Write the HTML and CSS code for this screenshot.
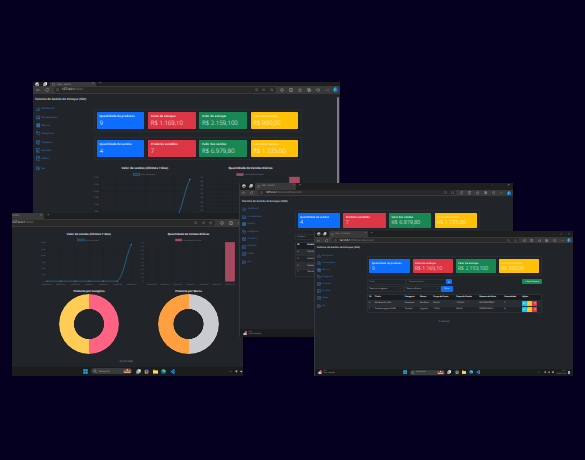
FILE: index.html
```
<!DOCTYPE html>
<html lang="pt-BR">
<head>
<meta charset="utf-8">
<title>Sistema de Gestão de Estoque</title>
<link rel="stylesheet" href="styles.css">
</head>
<body>
<svg class="defs" aria-hidden="true">
  <defs>
    <symbol id="i-dash" viewBox="0 0 16 16"><path d="M2 12.5a6.5 6.5 0 1 1 12 0zM8 11l3-4M4 9h1M8 4v2" fill="none" stroke="currentColor" stroke-width="1.6"/></symbol>
    <symbol id="i-truck" viewBox="0 0 16 16"><path d="M1 3h9v9H1zM10 6h3l2 3v3h-5" fill="none" stroke="currentColor" stroke-width="1.6"/><circle cx="4" cy="12.5" r="1.8" fill="currentColor"/><circle cx="12" cy="12.5" r="1.8" fill="currentColor"/></symbol>
    <symbol id="i-shop" viewBox="0 0 16 16"><path d="M1 6l2-4h10l2 4v2H1zM2 9h12v5H2z" fill="currentColor" fill-opacity=".65" stroke="currentColor" stroke-width="1"/></symbol>
    <symbol id="i-tag" viewBox="0 0 16 16"><path d="M1 2h6l7 7-5 5-7-7zM9 2l6 6" fill="none" stroke="currentColor" stroke-width="1.8"/><circle cx="5" cy="5" r="1.2" fill="currentColor"/></symbol>
    <symbol id="i-box" viewBox="0 0 16 16"><path d="M8 1l6.500 3v8L8 15l-6.500-3V4zM1.500 4L8 7l6.500-3M8 7v8" fill="none" stroke="currentColor" stroke-width="1.8"/></symbol>
    <symbol id="i-in" viewBox="0 0 16 16"><path d="M1.500 1.500h13v13h-13zM11 5l-6 6M5 6.500V11h4.500" fill="none" stroke="currentColor" stroke-width="1.700"/></symbol>
    <symbol id="i-out" viewBox="0 0 16 16"><path d="M1.500 1.500h13v13h-13zM5 11l6-6M6.500 5H11v4.500" fill="none" stroke="currentColor" stroke-width="1.700"/></symbol>
    <symbol id="i-exit" viewBox="0 0 16 16"><path d="M10 5V3H1.500v10H10v-2M5 8h10M12 5l3 3-3 3" fill="none" stroke="currentColor" stroke-width="1.800"/></symbol>
    <symbol id="i-back" viewBox="0 0 16 16"><path d="M15 8H2M7 3L2 8l5 5" fill="none" stroke="currentColor" stroke-width="1.600"/></symbol>
    <symbol id="i-reload" viewBox="0 0 16 16"><path d="M14 8a6 6 0 1 1-2-4.500M14 1v4h-4" fill="none" stroke="currentColor" stroke-width="1.600"/></symbol>
    <symbol id="i-info" viewBox="0 0 16 16"><circle cx="8" cy="8" r="6" fill="none" stroke="currentColor" stroke-width="1.600"/><path d="M8 7v4M8 4v1.500" stroke="currentColor" stroke-width="1.600"/></symbol>
    <symbol id="i-search" viewBox="0 0 16 16"><circle cx="7" cy="7" r="4.500" fill="none" stroke="currentColor" stroke-width="1.800"/><path d="M10.500 10.500L15 15" stroke="currentColor" stroke-width="1.800"/></symbol>
    <symbol id="i-star" viewBox="0 0 16 16"><path d="M8 1.500l2 4.500 5 .5-3.700 3.300L12.400 15 8 12.300 3.600 15l1.100-5.200L1 6.500 6 6z" fill="none" stroke="currentColor" stroke-width="1.500"/></symbol>
    <symbol id="i-read" viewBox="0 0 16 16"><path d="M2 13L7 3l4 10M4 9h5M11 3q3 2 0 5" fill="none" stroke="currentColor" stroke-width="1.500"/></symbol>
    <symbol id="i-split" viewBox="0 0 16 16"><rect x="1.500" y="2" width="13" height="12" rx="2" fill="none" stroke="currentColor" stroke-width="1.800"/><path d="M8 2v12" stroke="currentColor" stroke-width="1.800"/></symbol>
    <symbol id="i-copy" viewBox="0 0 16 16"><path d="M2 2h9v9H2zM6 6h8v8H6z" fill="none" stroke="currentColor" stroke-width="1.800"/></symbol>
    <symbol id="i-heart" viewBox="0 0 16 16"><path d="M8 14L2 8q-1-5 3-5 2 0 3 2 1-2 3-2 4 0 3 5z" fill="none" stroke="currentColor" stroke-width="1.800"/><circle cx="12" cy="11" r="3" fill="#2f8f4e"/></symbol>
    <symbol id="i-dots" viewBox="0 0 16 16"><path d="M2 8h3M7 8h3M12 8h3" stroke="currentColor" stroke-width="2"/></symbol>
    <symbol id="i-copilot" viewBox="0 0 16 16"><path d="M5 1h6l2 8-5 6H3L1 8z" fill="#1698d5"/><path d="M10 4h4l1 6-3 5H7z" fill="#2467d8"/><path d="M2 8l4-6 2 6-3 5z" fill="#31c5cf"/></symbol>
    <symbol id="i-doc" viewBox="0 0 16 16"><path d="M3 1h6l4 4v10H3zM9 1v4h4" fill="none" stroke="currentColor" stroke-width="1.500"/></symbol>
    <symbol id="i-avatar" viewBox="0 0 16 16"><circle cx="8" cy="8" r="7" fill="#d8d8d8"/><path d="M3 12q1-5 5-4t5-3v6l-4 3z" fill="#605c5c"/><circle cx="13" cy="5" r="2.500" fill="#c45"/></symbol>
    <symbol id="i-win" viewBox="0 0 16 16"><path d="M1 1h6.500v6.500H1zM8.500 1H15v6.500H8.500zM1 8.500h6.500V15H1zM8.500 8.500H15V15H8.500z" fill="#23aee5"/></symbol>
    <symbol id="i-task" viewBox="0 0 16 16"><path d="M5 1h10v10H5z" fill="#eee"/><path d="M1 5h10v10H1z" fill="#aaa"/></symbol>
    <symbol id="i-pilot" viewBox="0 0 16 16"><path d="M3 2h5l1 6-5 3-3-4z" fill="#268be0"/><path d="M8 1l5 2 2 5-5 1z" fill="#a761d6"/><path d="M15 8l-2 6-6 1 2-6z" fill="#ef754d"/><path d="M2 9l5 1v5l-4-1z" fill="#d8c049"/></symbol>
    <symbol id="i-folder" viewBox="0 0 16 16"><path d="M0 2h6l2 2h8v11H0z" fill="#e7ae2b"/><path d="M0 6h16v7H0z" fill="#ffda67"/></symbol>
    <symbol id="i-edge" viewBox="0 0 16 16"><circle cx="8" cy="8" r="7.500" fill="#1687d2"/><path d="M2 6q3-6 9-4 5 3 4 7-4 3-6 0 0-4-7-3z" fill="#49cb91"/><path d="M6 8q0 5 7 5-5 4-9 0-2-4 2-5z" fill="#12539f"/></symbol>
    <symbol id="i-code" viewBox="0 0 16 16"><path d="M11 0l4 2v12l-4 2-6-6-3 2-1-1 3-3-3-3 1-1 3 2zm0 5L8 8l3 3z" fill="#2189d8"/></symbol>
    <symbol id="i-town" viewBox="0 0 24 16"><path d="M1 14V7l4-3 3 4 3-6 4 5 3-5 5 5v7z" fill="#a45d50"/><path d="M3 11h18v3H3z" fill="#e5bf83"/><circle cx="12" cy="5" r="2" fill="#e9d7dc"/><circle cx="19" cy="6" r="2" fill="#db6d78"/></symbol>
    <symbol id="i-weather" viewBox="0 0 16 16"><path d="M1 15V9l6-3 7 4v5z" fill="#8fc3f1"/><circle cx="10.500" cy="4.500" r="4.500" fill="#e3434e"/><path d="M5 7h5v3H5z" fill="#eee"/></symbol>
    <symbol id="i-wifi" viewBox="0 0 16 16"><path d="M1 5q7-6 14 0L8 14z" fill="currentColor"/></symbol>
    <symbol id="i-sound" viewBox="0 0 16 16"><path d="M1 5h4l5-4v14l-5-4H1zM12 4q4 4 0 8" fill="currentColor"/></symbol>
    <symbol id="i-batt" viewBox="0 0 16 16"><path d="M0 4h14v8H0zM14 6h2v4h-2z" fill="currentColor"/></symbol>
    <symbol id="i-up" viewBox="0 0 16 16"><path d="M2 11l6-6 6 6" fill="none" stroke="currentColor" stroke-width="1.800"/></symbol>
    <symbol id="i-pen" viewBox="0 0 16 16"><path d="M2 14l1-4 8-8 3 3-8 8z" fill="none" stroke="currentColor" stroke-width="1.600"/></symbol>
    <symbol id="i-eye" viewBox="0 0 16 16"><path d="M1 8q7-9 14 0-7 9-14 0z" fill="none" stroke="currentColor" stroke-width="1.600"/><circle cx="8" cy="8" r="2" fill="currentColor"/></symbol>
    <symbol id="i-trash" viewBox="0 0 16 16"><path d="M2 4h12M4 4v10h8V4M6 2h4" fill="none" stroke="currentColor" stroke-width="1.600"/></symbol>

    <symbol id="chart-line" viewBox="39.25 230 99.5 58">
      <text class="c-title" x="67" y="234.700" textLength="44">Valor de vendas (Últimos 7 dias)</text>
      <rect x="78" y="239" width="6.500" height="2" fill="#1b3c56" stroke="#2e77aa" stroke-width=".4"/>
      <text class="c-label" x="85.500" y="240.800" textLength="13.500">Valor de vendas</text>
      <path class="c-grid" d="M47 242.400V282M61 242.400V282M75.500 242.400V282M89.500 242.400V282M103.500 242.400V282M117.500 242.400V282M131.500 242.400V282M45.500 242.400h86M45.500 248.900h86M45.500 255.300h86M45.500 261.800h86M45.500 268.200h86M45.500 274.700h86M45.500 281.200h86"/>
      <g class="c-label">
        <text x="41" y="243.100">3.000</text><text x="41" y="249.600">2.500</text><text x="41" y="256">2.000</text><text x="41" y="262.500">1.500</text><text x="41" y="268.900">1.000</text><text x="42" y="275.400">500</text><text x="44" y="281.900">0</text>
      </g>
      <path d="M47 281.200H117.500C124 276 125.500 258 131.500 244.500" fill="none" stroke="#2b78b2" stroke-width=".65"/>
      <g fill="#2d7dbb"><circle cx="47" cy="281.200" r=".75"/><circle cx="61" cy="281.200" r=".75"/><circle cx="75.500" cy="281.200" r=".75"/><circle cx="89.500" cy="281.200" r=".75"/><circle cx="103.500" cy="281.200" r=".75"/><circle cx="117.500" cy="281.200" r=".75"/><circle cx="131.500" cy="244.500" r=".75"/></g>
      <g class="c-label">
        <text x="42.500" y="284.700" textLength="9">2024-09-24</text><text x="56.500" y="284.700" textLength="9">2024-09-25</text><text x="71" y="284.700" textLength="9">2024-09-26</text><text x="85" y="284.700" textLength="9">2024-09-27</text><text x="99" y="284.700" textLength="9">2024-09-28</text><text x="113" y="284.700" textLength="9">2024-09-29</text><text x="127" y="284.700" textLength="9">2024-09-30</text>
      </g>
    </symbol>
    <symbol id="chart-bar" viewBox="138.75 230 99.5 58">
      <text class="c-title" x="167.500" y="234.700" textLength="41.500">Quantidade de Vendas Diárias</text>
      <rect x="175.300" y="239" width="6.300" height="2" fill="#a44860" stroke="#d9506f" stroke-width=".3"/>
      <text class="c-label" x="182.500" y="240.800" textLength="18.500">Quantidade de Vendas</text>
      <path class="c-grid" d="M145 242.400V282M158 242.400V282M171 242.400V282M184 242.400V282M197 242.400V282M210 242.400V282M223 242.400V282M236 242.400V282M144 242.400h92M144 246.300h92M144 250.200h92M144 254h92M144 257.900h92M144 261.800h92M144 265.700h92M144 269.600h92M144 273.400h92M144 277.300h92M144 281.200h92"/>
      <g class="c-label">
        <text x="141" y="243.100">1,0</text><text x="141" y="247">0,9</text><text x="141" y="250.900">0,8</text><text x="141" y="254.700">0,7</text><text x="141" y="258.600">0,6</text><text x="141" y="262.500">0,5</text><text x="141" y="266.400">0,4</text><text x="141" y="270.300">0,3</text><text x="141" y="274.100">0,2</text><text x="141" y="278">0,1</text><text x="142" y="281.900">0</text>
      </g>
      <rect x="225" y="242.300" width="9.500" height="38.900" fill="#a54a60" stroke="#d04c69" stroke-width=".35"/>
      <g class="c-label">
        <text x="147" y="284.700" textLength="9">2024-09-24</text><text x="160" y="284.700" textLength="9">2024-09-25</text><text x="173" y="284.700" textLength="9">2024-09-26</text><text x="186" y="284.700" textLength="9">2024-09-27</text><text x="199" y="284.700" textLength="9">2024-09-28</text><text x="212" y="284.700" textLength="9">2024-09-29</text><text x="225" y="284.700" textLength="9">2024-09-30</text>
      </g>
    </symbol>
  </defs>
</svg>

<main class="canvas">
  <section class="window win-a">
    <div class="tabs"><svg><use href="#i-avatar"/></svg><svg><use href="#i-task"/></svg><div class="tab"><svg><use href="#i-doc"/></svg><span>SGE - Home</span><b>×</b></div><i>+</i></div>
    <div class="toolbar">
      <svg><use href="#i-back"/></svg><svg><use href="#i-reload"/></svg>
      <div class="address"><svg><use href="#i-info"/></svg><span>127.0.0.1<em>:8000</em></span><svg class="push"><use href="#i-search"/></svg><svg><use href="#i-read"/></svg><svg><use href="#i-star"/></svg></div>
      <div class="tools"><svg><use href="#i-info"/></svg><svg><use href="#i-split"/></svg><svg><use href="#i-star"/></svg><svg><use href="#i-copy"/></svg><svg><use href="#i-heart"/></svg><svg><use href="#i-dots"/></svg><svg class="pilot"><use href="#i-copilot"/></svg></div>
    </div>
    <header>Sistema de Gestão de Estoque (SGE)</header>
    <div class="body">
      <nav><a><svg><use href="#i-dash"/></svg>Dashboard</a><a><svg><use href="#i-truck"/></svg>Fornecedores</a><a><svg><use href="#i-shop"/></svg>Marcas</a><a><svg><use href="#i-tag"/></svg>Categorias</a><a><svg><use href="#i-box"/></svg>Produtos</a><a><svg><use href="#i-in"/></svg>Entradas</a><a><svg><use href="#i-out"/></svg>Saídas</a><a class="exit"><svg><use href="#i-exit"/></svg>Sair</a></nav>
      <div class="main">
        <div class="cards">
          <div class="card blue"><h3>Quantidade de produtos</h3><p>9</p></div>
          <div class="card red"><h3>Custo de estoque</h3><p>R$ 1.169,10</p></div>
          <div class="card green"><h3>Valor de estoque</h3><p>R$ 2.159,100</p></div>
          <div class="card yellow"><h3>Lucro de estoque</h3><p>R$ 990,00</p></div>
        </div>
        <div class="cards">
          <div class="card blue"><h3>Quantidade de vendas</h3><p>4</p></div>
          <div class="card red"><h3>Produtos vendidos</h3><p>7</p></div>
          <div class="card green"><h3>Valor das vendas</h3><p>R$ 6.979,80</p></div>
          <div class="card yellow"><h3>Lucro das vendas</h3><p>R$ 1.725,00</p></div>
        </div>
        <div class="charts"><svg><use href="#chart-line"/></svg><svg><use href="#chart-bar"/></svg></div>
      </div>
    </div>
    <div class="scroll"></div>
  </section>

  <section class="window win-b">
    <div class="tabs"><div class="tab"><span>Home</span><b>×</b></div><i>+</i></div>
    <div class="toolbar">
      <div class="address"><span>127.0.0.1<em>:8000</em></span><svg class="push"><use href="#i-search"/></svg><svg><use href="#i-read"/></svg><svg><use href="#i-star"/></svg></div>
      <div class="tools"><svg><use href="#i-info"/></svg><svg><use href="#i-split"/></svg><svg><use href="#i-star"/></svg></div>
    </div>
    <div class="charts"><svg><use href="#chart-line"/></svg><svg><use href="#chart-bar"/></svg></div>
    <div class="donuts">
      <figure><figcaption>Produtos por Categoria</figcaption><div class="donut warm"></div></figure>
      <figure><figcaption>Produtos por Marca</figcaption><div class="donut cool"></div></figure>
    </div>
    <footer>© 2024 SGE</footer>
    <div class="taskbar">
      <div class="apps"><svg><use href="#i-win"/></svg><div class="find"><svg><use href="#i-search"/></svg><span>Pesquisar</span><svg class="town"><use href="#i-town"/></svg></div><svg><use href="#i-task"/></svg><svg><use href="#i-pilot"/></svg><svg><use href="#i-folder"/></svg><svg><use href="#i-edge"/></svg><svg><use href="#i-code"/></svg></div>
      <div class="tray"><svg><use href="#i-up"/></svg><svg><use href="#i-wifi"/></svg><svg><use href="#i-sound"/></svg></div>
    </div>
  </section>

  <section class="window win-c">
    <div class="tabs"><svg><use href="#i-avatar"/></svg><svg><use href="#i-task"/></svg><div class="tab"><svg><use href="#i-doc"/></svg><span>SGE - Saídas</span><b>×</b></div><i>+</i><div class="controls"><span>–</span><span>▫</span><span>×</span></div></div>
    <div class="toolbar">
      <svg><use href="#i-back"/></svg><svg><use href="#i-reload"/></svg>
      <div class="address"><svg><use href="#i-info"/></svg><span>127.0.0.1<em>:8000/outflows/list/</em></span><svg class="push"><use href="#i-search"/></svg><svg><use href="#i-star"/></svg></div>
      <div class="tools"><svg><use href="#i-info"/></svg><svg><use href="#i-split"/></svg><svg><use href="#i-star"/></svg><svg><use href="#i-copy"/></svg><svg><use href="#i-heart"/></svg><svg><use href="#i-dots"/></svg><svg class="pilot"><use href="#i-copilot"/></svg></div>
    </div>
    <header>Sistema de Gestão de Estoque (SGE)</header>
    <div class="body">
      <nav><a><svg><use href="#i-dash"/></svg>Dashboard</a><a><svg><use href="#i-truck"/></svg>Fornecedores</a><a><svg><use href="#i-shop"/></svg>Marcas</a><a><svg><use href="#i-tag"/></svg>Categorias</a><a><svg><use href="#i-box"/></svg>Produtos</a><a><svg><use href="#i-in"/></svg>Entradas</a><a><svg><use href="#i-out"/></svg>Saídas</a><a class="exit"><svg><use href="#i-exit"/></svg>Sair</a></nav>
      <div class="main">
        <div class="cards">
          <div class="card blue"><h3>Quantidade de vendas</h3><p>4</p></div>
          <div class="card red"><h3>Produtos vendidos</h3><p>7</p></div>
          <div class="card green"><h3>Valor das vendas</h3><p>R$ 6.979,80</p></div>
          <div class="card yellow"><h3>Lucro das vendas</h3><p>R$ 1.725,00</p></div>
        </div>
        <div class="filters"><div class="field wide">Produto</div></div>
        <div class="table sales">
          <div class="row head"><span>ID</span><span>Produto</span></div>
          <div class="row odd"><span>4</span><span>Teclado</span></div>
          <div class="row"><span>3</span><span>Notebook</span></div>
          <div class="row odd"><span>2</span><span>Notebook</span></div>
          <div class="row"><span>1</span><span>Teclado</span></div>
        </div>
      </div>
    </div>
    <div class="taskbar"><div class="weather"><svg><use href="#i-weather"/></svg><div><b>24°C</b><span>Pred. nublado</span></div></div></div>
  </section>

  <section class="window win-d">
    <div class="tabs"><svg><use href="#i-avatar"/></svg><svg><use href="#i-task"/></svg><div class="tab"><svg><use href="#i-doc"/></svg><span>SGE - Produtos</span><b>×</b></div><i>+</i><div class="controls"><span>–</span><span>▫</span><span>×</span></div></div>
    <div class="toolbar">
      <svg><use href="#i-back"/></svg><svg><use href="#i-reload"/></svg>
      <div class="address"><svg><use href="#i-info"/></svg><span>127.0.0.1<em>:8000/products/list/</em></span><svg class="push"><use href="#i-search"/></svg><svg><use href="#i-star"/></svg></div>
      <div class="tools"><svg><use href="#i-info"/></svg><svg><use href="#i-split"/></svg><svg><use href="#i-star"/></svg><svg><use href="#i-copy"/></svg><svg><use href="#i-heart"/></svg><svg><use href="#i-dots"/></svg><svg class="pilot"><use href="#i-copilot"/></svg></div>
    </div>
    <header>Sistema de Gestão de Estoque (SGE)</header>
    <div class="body">
      <nav><a><svg><use href="#i-dash"/></svg>Dashboard</a><a><svg><use href="#i-truck"/></svg>Fornecedores</a><a><svg><use href="#i-shop"/></svg>Marcas</a><a><svg><use href="#i-tag"/></svg>Categorias</a><a><svg><use href="#i-box"/></svg>Produtos</a><a><svg><use href="#i-in"/></svg>Entradas</a><a><svg><use href="#i-out"/></svg>Saídas</a><a class="exit"><svg><use href="#i-exit"/></svg>Sair</a></nav>
      <div class="main">
        <div class="cards">
          <div class="card blue"><h3>Quantidade de produtos</h3><p>9</p></div>
          <div class="card red"><h3>Custo de estoque</h3><p>R$ 1.169,10</p></div>
          <div class="card green"><h3>Valor de estoque</h3><p>R$ 2.159,100</p></div>
          <div class="card yellow"><h3>Lucro de estoque</h3><p>R$ 990,00</p></div>
        </div>
        <div class="filters"><div class="field">Título</div><div class="field">Número de Série</div><div class="btn primary"><svg><use href="#i-search"/></svg></div><div class="btn success">+ Novo Produto</div></div>
        <div class="filters second"><div class="field select">Todas as Categorias<b>⌄</b></div><div class="field select">Todas as Marcas<b>⌄</b></div><div class="btn primary filter">Filtrar</div></div>
        <div class="table products">
          <div class="row head"><span>ID</span><span>Título</span><span>Categoria</span><span>Marca</span><span>Preço de Custo</span><span>Preço de Venda</span><span>Número de Série</span><span>Quantidade</span><span>Ações</span></div>
          <div class="row odd"><span>2</span><span>MacBook Pro M2</span><span>Notebook</span><span>MacBook</span><span>900,00</span><span>1.500,00</span><span>SN12345678901</span><span>5</span><span class="acts"><i class="info"><svg><use href="#i-eye"/></svg></i><i class="warn"><svg><use href="#i-pen"/></svg></i><i class="danger"><svg><use href="#i-trash"/></svg></i></span></div>
          <div class="row"><span>1</span><span>Teclado Logitech K380</span><span>Teclado</span><span>Logitech</span><span>170,00</span><span>220,00</span><span>SN9876543210</span><span>4</span><span class="acts"><i class="info"><svg><use href="#i-eye"/></svg></i><i class="warn"><svg><use href="#i-pen"/></svg></i><i class="danger"><svg><use href="#i-trash"/></svg></i></span></div>
        </div>
      </div>
    </div>
    <footer>© 2024 SGE</footer>
    <div class="taskbar">
      <div class="weather"><svg><use href="#i-weather"/></svg><div><b>24°C</b><span>Pred. nublado</span></div></div>
      <div class="apps"><svg><use href="#i-win"/></svg><div class="find"><svg><use href="#i-search"/></svg><span>Pesquisar</span><svg class="town"><use href="#i-town"/></svg></div><svg><use href="#i-task"/></svg><svg><use href="#i-pilot"/></svg><svg><use href="#i-folder"/></svg><svg><use href="#i-edge"/></svg><svg><use href="#i-code"/></svg></div>
      <div class="tray"><svg><use href="#i-up"/></svg><svg><use href="#i-wifi"/></svg><svg><use href="#i-sound"/></svg><svg><use href="#i-batt"/></svg><div class="clock"><span>19:20</span><span>30/09/2024</span></div><u></u></div>
    </div>
  </section>
</main>
</body>
</html>
```
FILE: styles.css
```
* { box-sizing: border-box; margin: 0; padding: 0; }
body { width: 585px; height: 460px; overflow: hidden; background: #050020; font-family: "Open Sans", "Noto Sans", sans-serif; text-rendering: geometricPrecision; }
.defs { position: absolute; width: 0; height: 0; }
.canvas { position: relative; width: 585px; height: 460px; overflow: hidden; }

/* Every window is measured in its own unit, --u */
.window {
  --u: 1px;
  position: absolute;
  display: flex;
  flex-direction: column;
  overflow: hidden;
  background: #212529;
  color: #e4e6e8;
  font-size: calc(var(--u) * 2.9);
  line-height: 1.2;
  white-space: nowrap;
}
.win-a { left: 33px; top: 82px; width: 307px; height: 170px; }
.win-b { left: 12px; top: 212.5px; width: 231px; height: 163px; }
.win-c { --u: .893px; left: 239px; top: 183px; width: 274px; height: 154px; border-left: .6px solid #34373a; }
.win-d { --u: .844px; left: 314px; top: 231px; width: 259px; height: 145px; border-left: .6px solid #34373a; }

.window svg { flex: none; width: calc(var(--u) * 4); height: calc(var(--u) * 4); }

/* Browser chrome */
.tabs { flex: none; height: calc(var(--u) * 7.3); display: flex; align-items: center; background: #1e1f1f; padding-left: calc(var(--u) * 2.3); gap: calc(var(--u) * 3); font-size: calc(var(--u) * 2.6); color: #a2a2a2; }
.tab { height: 100%; width: calc(var(--u) * 46); display: flex; align-items: center; gap: calc(var(--u) * 1.5); padding: 0 calc(var(--u) * 2); background: #393939; border-radius: 1px 1px 0 0; }
.tabs svg { width: calc(var(--u) * 4.4); height: calc(var(--u) * 4.4); }
.tab svg { width: calc(var(--u) * 3.4); height: calc(var(--u) * 3.4); }
.tab b { margin-left: auto; font-size: calc(var(--u) * 3.6); font-weight: 400; }
.tabs i { font-style: normal; font-size: calc(var(--u) * 4.2); }
.controls { margin-left: auto; display: flex; gap: calc(var(--u) * 7.2); padding-right: calc(var(--u) * 4); font-size: calc(var(--u) * 4); }
.win-a .tabs { height: 4.4px; overflow: hidden; align-items: flex-end; }
.toolbar { flex: none; height: calc(var(--u) * 7.2); display: flex; align-items: center; background: #393939; color: #b0b0b0; padding: 0 calc(var(--u) * 1.8) 0 calc(var(--u) * 2.5); gap: calc(var(--u) * 5); }
.address { flex: 1; height: calc(var(--u) * 5.4); display: flex; align-items: center; gap: calc(var(--u) * 4); border-radius: 3px; background: #292929; padding: 0 calc(var(--u) * 2); font-size: calc(var(--u) * 3.1); color: #fff; }
.address svg { width: calc(var(--u) * 3.6); height: calc(var(--u) * 3.6); color: #8d8d8d; }
.address span { margin-left: calc(var(--u) * -1.3); padding-top: .3px; }
.address em { font-style: normal; color: #858585; }
.push { margin-left: auto; }
.tools { display: flex; align-items: center; gap: calc(var(--u) * 5); margin-left: calc(var(--u) * -.3); }
.window .pilot { width: calc(var(--u) * 5); height: calc(var(--u) * 5); margin-left: calc(var(--u) * -1); }
.win-b .tabs { height: 6.5px; padding-left: 0; }
.win-b .tab { width: 32px; padding-left: 0; font-size: 2.7px; }
.win-b .toolbar { height: 8px; padding: 0 1.5px 0 0; }
.win-b .address { padding-left: 0; }
.win-b .address span { margin-left: 0; }
.scroll { position: absolute; right: 1.200px; top: 15px; width: 1.600px; height: 150px; background: #7b7d7f; border-radius: 1px; }

/* Page frame */
header { flex: none; height: calc(var(--u) * 10.8); line-height: calc(var(--u) * 11.4); padding-left: calc(var(--u) * 2.1); font-size: calc(var(--u) * 2.98); font-weight: 600; color: #dfe1e3; }
.body { display: grid; grid-template-columns: calc(var(--u) * 61.200) calc(var(--u) * 207.6); }
.win-a .body { grid-template-columns: 60.5px 208px; }
nav { display: flex; flex-direction: column; padding: calc(var(--u) * .4) 0 0 calc(var(--u) * 2.5); }
nav a { height: calc(var(--u) * 8.32); display: flex; align-items: center; gap: calc(var(--u) * 1.1); color: #3a80d6; font-size: calc(var(--u) * 2.5); }
nav svg { width: calc(var(--u) * 4.8) !important; height: calc(var(--u) * 4.8) !important; }
nav .exit { margin-top: calc(var(--u) * 1.1); }

/* Metric cards */
.cards { display: grid; grid-template-columns: repeat(4, 1fr); gap: calc(var(--u) * 3.5); padding: calc(var(--u) * 2.200); margin-top: calc(var(--u) * 4.8); border: .5px solid #292d31; border-radius: 1px; height: calc(var(--u) * 23.1); }
.card { border-radius: calc(var(--u) * .8); padding: calc(var(--u) * 3.1) calc(var(--u) * 2.8) 0; color: #fff; line-height: 1; }
.card h3 { font-size: calc(var(--u) * 2.9); font-weight: 700; opacity: .85; }
.card p { font-size: calc(var(--u) * 6.1); font-weight: 300; margin-top: calc(var(--u) * 1.9); }
.blue { background: #0d6efd; }
.red { background: #dc3545; }
.green { background: #198754; }
.yellow { background: #ffc107; }
.yellow h3 { opacity: .6; }

/* Charts */
.charts { display: flex; }
.win-a .charts { margin: 3.500px 0 0 -1.200px; }
.win-a .charts svg { width: 105.5px; height: 61.500px; }
.win-b .charts { margin: 3px 0 0 27.25px; }
.win-b .charts svg { width: 99.5px; height: 58px; }
.c-title { font-size: 2.800px; font-weight: 700; fill: #e2e4e6; }
.c-label { font-size: 1.900px; fill: #7c7f82; }
.c-grid { fill: none; stroke: #1d2124; stroke-width: .3; }
.donuts { display: grid; grid-template-columns: repeat(2, 99.5px); margin-left: 27.25px; margin-top: 1.500px; }
figure { display: flex; flex-direction: column; align-items: center; gap: 1.200px; }
figcaption { font-size: 2.700px; font-weight: 700; color: #e2e4e6; line-height: 3px; }
.donut { width: 60.600px; height: 60.600px; border-radius: 50%; -webkit-mask: radial-gradient(circle, transparent 14.800px, #000 15.300px); mask: radial-gradient(circle, transparent 14.800px, #000 15.300px); }
.warm { background: linear-gradient(90deg, #ffcd56 50%, #ff6384 50%); }
.cool { background: linear-gradient(90deg, #ff9f40 50%, #c9cbcf 50%); }
footer { text-align: center; font-size: calc(var(--u) * 2.400); color: #999c9f; }
.win-b footer { margin-top: 5.6px; padding-right: 3px; }
.win-d footer { margin-top: 7.400px; }

/* Filters and tables */
.filters { display: flex; align-items: center; margin-top: calc(var(--u) * 3.5); height: calc(var(--u) * 7); font-size: calc(var(--u) * 2.300); color: #a2a5a8; }
.filters.second { margin-top: calc(var(--u) * 1.6); }
.field { width: calc(var(--u) * 47); height: calc(var(--u) * 6.6); display: flex; align-items: center; padding: 0 calc(var(--u) * 2); border: .5px solid #2a2f33; border-radius: calc(var(--u) * .7); }
.field.wide { width: calc(var(--u) * 86); }
.second .field { width: calc(var(--u) * 43.8); color: #cccfd2; }
.field b { margin-left: auto; }
.btn { height: calc(var(--u) * 6.200); display: flex; align-items: center; justify-content: center; border-radius: calc(var(--u) * .8); color: #fff; font-size: calc(var(--u) * 2.300); }
.primary { width: calc(var(--u) * 7); background: #0d6efd; }
.primary svg { width: calc(var(--u) * 3) !important; height: calc(var(--u) * 3) !important; }
.primary.filter { width: calc(var(--u) * 14.200); margin-left: calc(var(--u) * .4); }
.success { width: calc(var(--u) * 23); background: #198754; margin-left: auto; }
.table { margin-top: calc(var(--u) * 1.9); border: .5px solid #2b3035; font-size: calc(var(--u) * 2.400); color: #d4d6d8; }
.row { display: grid; align-items: center; height: calc(var(--u) * 7.600); padding-left: calc(var(--u) * 1.700); border-top: .5px solid #2b3035; }
.odd { background: #2a2e32; }
.head { height: calc(var(--u) * 6.300); background: #1a1d20; font-weight: 700; color: #f2f3f4; border: 0; }
.sales .row { grid-template-columns: calc(var(--u) * 11.300) 1fr; }
.sales { margin-top: calc(var(--u) * 2.300); }
.products .row { grid-template-columns: 5.800px 30px 15.200px 13.300px 22.800px 23px 25px 18px 1fr; height: calc(var(--u) * 7.500); }
.products .head { height: calc(var(--u) * 6); }
.acts { display: flex; }
.acts i { width: 5.100px; height: 4.600px; display: flex; align-items: center; justify-content: center; color: #fff; border-radius: .6px; }
.acts svg { width: 2.600px; height: 2.600px; }
.info { background: #0dcaf0; }
.warn { background: #ffc107; }
.danger { background: #dc3545; }

/* Taskbar */
.taskbar { position: relative; flex: none; margin-top: auto; height: calc(var(--u) * 8.700); display: flex; align-items: center; background: #1b1c1c; color: #b2b2b2; }
.weather { display: flex; align-items: center; gap: calc(var(--u) * .8); padding-left: calc(var(--u) * 3.800); font-size: calc(var(--u) * 2.100); line-height: 1; }
.weather svg { width: calc(var(--u) * 5); height: calc(var(--u) * 5); }
.weather div, .clock { display: flex; flex-direction: column; gap: calc(var(--u) * .4); }
.weather b { font-weight: 400; }
.weather > div { width: calc(var(--u) * 16); }
.apps { display: flex; align-items: center; gap: calc(var(--u) * 3.600); }
.apps > svg { width: calc(var(--u) * 5); height: calc(var(--u) * 5); }
.find { width: calc(var(--u) * 41.500); height: calc(var(--u) * 6.400); margin: 0 calc(var(--u) * -.2) 0 calc(var(--u) * -.9); display: flex; align-items: center; gap: calc(var(--u) * 2); padding: 0 calc(var(--u) * .8) 0 calc(var(--u) * 2); border-radius: 4px; background: #393a3a; font-size: calc(var(--u) * 2.500); }
.find .town { width: calc(var(--u) * 8.500); height: calc(var(--u) * 5.500); margin-left: auto; }
.tray { margin-left: auto; display: flex; align-items: center; gap: calc(var(--u) * 1.800); }
.tray svg { width: calc(var(--u) * 2.900); height: calc(var(--u) * 2.900); }
.tray svg:first-child { margin-right: calc(var(--u) * 2); }
.win-b .apps { padding-left: 71px; }
.win-d .apps { margin-left: 66.500px; }
.clock { font-size: calc(var(--u) * 2.100); line-height: 1; text-align: right; margin-left: calc(var(--u) * 1.200); }
.tray u { width: 2px; height: 2.500px; background: #77b4de; margin-right: 3.500px; }
```
